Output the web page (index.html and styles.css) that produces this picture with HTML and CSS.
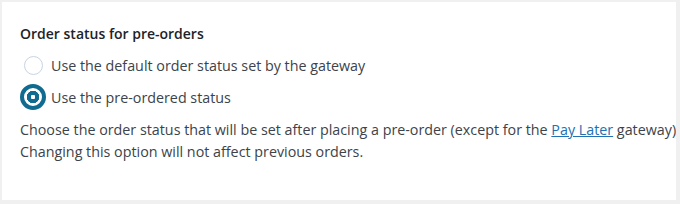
FILE: index.html
```html
<!DOCTYPE html>
<html lang="en">
<head>
    <meta charset="UTF-8">
    <title>Pre-order settings</title>
    <link rel="stylesheet" href="styles.css">
</head>
<body>
    <div class="panel">
        <h2 class="field-title">Order status for pre-orders</h2>
        <div class="options">
            <label class="option">
                <span class="radio"></span>
                <span>Use the default order status set by the gateway</span>
            </label>
            <label class="option">
                <span class="radio checked"></span>
                <span>Use the pre-ordered status</span>
            </label>
        </div>
        <p class="description">
            Choose the order status that will be set after placing a pre-order (except for the <a href="#">Pay Later</a> gateway).<br>
            Changing this option will not affect previous orders.
        </p>
    </div>
</body>
</html>
```

FILE: styles.css
```css
body {
    margin: 0;
    background-color: #f0f0f1;
    font-family: 'Open Sans', sans-serif;
    font-size: 14.3px;
    color: #3c434a;
}
.panel {
    margin: 2px 4px 4px 2px;
    height: 198px;
    background-color: #fff;
    padding: 0 0 0 18px;
    overflow: hidden;
    white-space: nowrap;
}
.field-title {
    margin: 0;
    padding-top: 22px;
    font-size: 14px;
    font-weight: 600;
    line-height: 20px;
    color: #1d2327;
}
.options {
    margin-top: 5px;
    display: flex;
    flex-direction: column;
}
.option {
    display: flex;
    align-items: center;
    gap: 5px;
    height: 32px;
}
.radio {
    width: 26px;
    height: 26px;
    display: flex;
    align-items: center;
    justify-content: center;
}
.radio::before {
    content: "";
    width: 19px;
    height: 19px;
    box-sizing: border-box;
    border: 1px solid #c8d3e3;
    border-radius: 50%;
}
.radio.checked::before {
    width: 26px;
    height: 26px;
    border: 4px solid #0f6b8f;
    background: radial-gradient(circle, #fff 0 2px, #0f6b8f 2.5px 6px, #fff 6.5px);
}
.description {
    margin: 6px 0 0;
    line-height: 22px;
}
.description a {
    color: #2271b1;
}
```
